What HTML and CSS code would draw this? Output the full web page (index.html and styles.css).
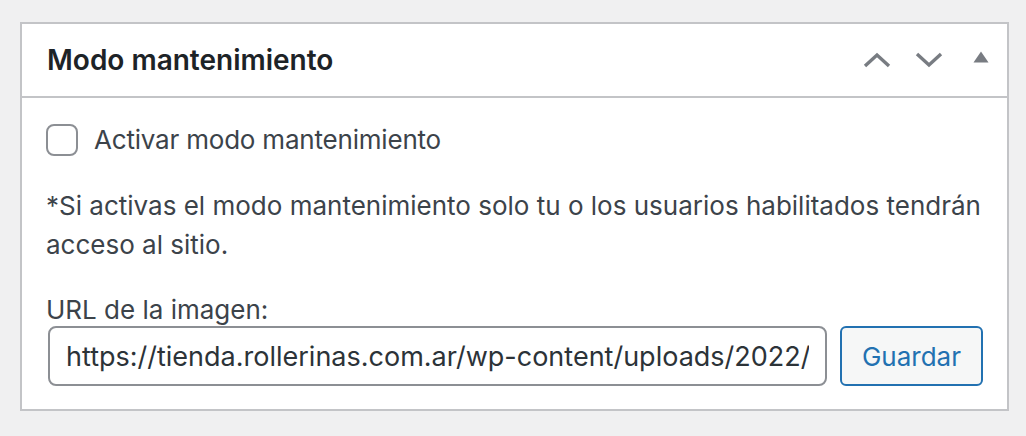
FILE: index.html
```html
<!DOCTYPE html>
<html lang="es">
<head>
    <meta charset="UTF-8">
    <title>Modo mantenimiento</title>
    <link rel="stylesheet" href="styles.css">
</head>
<body>
    <div class="postbox">
        <div class="postbox-header">
            <h2 class="hndle">Modo mantenimiento</h2>
            <div class="handle-actions">
                <button type="button" class="handle-btn" aria-label="Subir">
                    <svg width="28" height="16" viewBox="0 0 28 16"><path d="M2 14 L14 3 L26 14" fill="none" stroke="#787c82" stroke-width="3.4"/></svg>
                </button>
                <button type="button" class="handle-btn" aria-label="Bajar">
                    <svg width="28" height="16" viewBox="0 0 28 16"><path d="M2 2 L14 13 L26 2" fill="none" stroke="#787c82" stroke-width="3.4"/></svg>
                </button>
                <button type="button" class="handle-btn toggle" aria-label="Plegar">
                    <svg width="16" height="12" viewBox="0 0 16 12"><path d="M8 0.5 L15.5 11.5 L0.5 11.5 Z" fill="#787c82"/></svg>
                </button>
            </div>
        </div>
        <div class="inside">
            <label class="check-row"><input type="checkbox" name="maintenance"> Activar modo mantenimiento</label>
            <p class="note">*Si activas el modo mantenimiento solo tu o los usuarios habilitados tendrán acceso al sitio.</p>
            <label class="field-label" for="imageUrl">URL de la imagen:</label>
            <div class="url-row">
                <input type="text" id="imageUrl" value="https://tienda.rollerinas.com.ar/wp-content/uploads/2022/">
                <button type="button" class="button">Guardar</button>
            </div>
        </div>
    </div>
</body>
</html>
```

FILE: styles.css
```css
body {
    margin: 0;
    padding: 22px 17px 0 20px;
    background-color: #f0f0f1;
    font-family: Inter, "Noto Sans", sans-serif;
    color: #3c434a;
    font-size: 26px;
}
.postbox {
    background-color: #fff;
    border: 2px solid #c3c4c7;
}
.postbox-header {
    display: flex;
    align-items: center;
    justify-content: space-between;
    height: 72px;
    border-bottom: 2px solid #c3c4c7;
    padding-left: 25px;
}
.hndle {
    margin: 0;
    font-size: 28px;
    font-weight: 600;
    color: #1d2327;
}
.handle-actions {
    display: flex;
    align-items: center;
    padding-right: 8px;
}
.handle-btn {
    display: flex;
    align-items: center;
    justify-content: center;
    width: 52px;
    height: 72px;
    padding: 0;
    border: none;
    background: none;
}
.handle-btn.toggle {
    width: 36px;
    margin-left: 8px;
    padding-bottom: 6px;
}
.inside {
    padding: 26px 24px 23px 24px;
}
.check-row {
    display: flex;
    align-items: center;
    gap: 16px;
    line-height: 32px;
    letter-spacing: -0.2px;
}
.check-row input {
    appearance: none;
    width: 32px;
    height: 32px;
    margin: 0;
    border: 2px solid #8c8f94;
    border-radius: 8px;
    background-color: #fff;
}
.note {
    margin: 30px 0 29px 0;
    line-height: 39px;
}
.field-label {
    display: block;
    line-height: 33px;
}
.url-row {
    display: flex;
    gap: 13px;
}
.url-row input {
    width: 780px;
    height: 60px;
    box-sizing: border-box;
    margin: 0 0 0 2px;
    padding: 0 16px;
    border: 2px solid #8c8f94;
    border-radius: 8px;
    font-family: inherit;
    font-size: 27px;
    color: #2c3338;
}
.button {
    flex: 1;
    height: 60px;
    padding: 0 20px;
    border: 2px solid #2271b1;
    border-radius: 6px;
    background-color: #f6f7f7;
    color: #2271b1;
    font-family: inherit;
    font-size: 26px;
}
```
